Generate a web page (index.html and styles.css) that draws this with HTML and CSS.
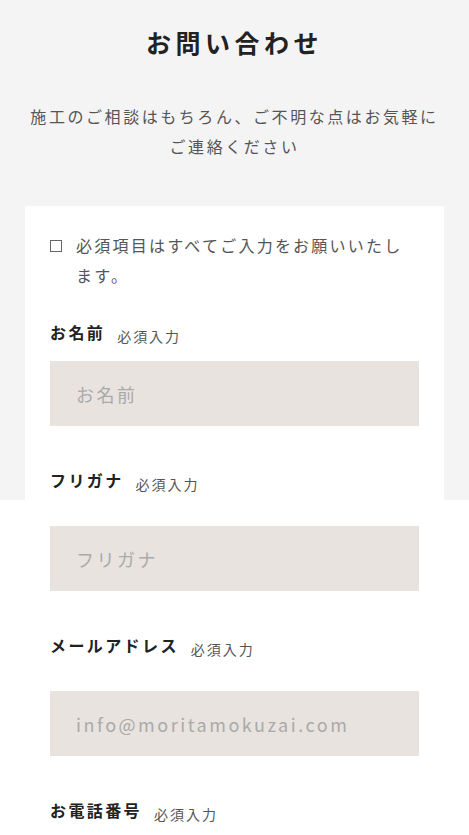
FILE: index.html
```html
<!DOCTYPE html>
<html lang="ja">
<head>
<meta charset="utf-8">
<title>お問い合わせ</title>
<link rel="stylesheet" href="styles.css">
</head>
<body>
<div class="page">
  <section class="hero">
    <h1 class="title">お問い合わせ</h1>
    <p class="lead">施工のご相談はもちろん、ご不明な点はお気軽にご連絡ください</p>
  </section>
  <form class="card">
    <div class="notice">
      <span class="notice-box"></span>
      <p class="notice-text">必須項目はすべてご入力をお願いいたします。</p>
    </div>
    <div class="field field-first">
      <div class="label-row"><span class="label">お名前</span><span class="req">必須入力</span></div>
      <input class="input" type="text" placeholder="お名前">
    </div>
    <div class="field">
      <div class="label-row"><span class="label">フリガナ</span><span class="req">必須入力</span></div>
      <input class="input" type="text" placeholder="フリガナ">
    </div>
    <div class="field">
      <div class="label-row"><span class="label">メールアドレス</span><span class="req">必須入力</span></div>
      <input class="input" type="email" placeholder="info@moritamokuzai.com">
    </div>
    <div class="field">
      <div class="label-row"><span class="label">お電話番号</span><span class="req">必須入力</span></div>
      <input class="input" type="tel" placeholder="">
    </div>
  </form>
</div>
</body>
</html>
```
FILE: styles.css
```css
html, body {
  margin: 0;
  padding: 0;
}
body {
  font-family: "Noto Sans CJK JP", "Noto Sans", sans-serif;
  color: #222;
  background: #fff;
}
.page {
  background: linear-gradient(#f4f4f4 0, #f4f4f4 500px, #fff 500px);
  padding-bottom: 40px;
}
.hero {
  padding: 24px 25px 0;
  text-align: center;
}
.title {
  margin: 0;
  font-size: 25px;
  line-height: 36px;
  font-weight: 700;
  letter-spacing: 0.18em;
  color: #222;
}
.lead {
  margin: 41px 0 0;
  font-size: 16px;
  line-height: 30px;
  letter-spacing: 0.16em;
  color: #555;
}
.card {
  margin: 45px 25px 0;
  background: #fff;
  border-radius: 2px;
  padding: 24px 25px 0;
}
.notice {
  display: flex;
  align-items: flex-start;
  gap: 14px;
}
.notice-box {
  flex: none;
  width: 10px;
  height: 10px;
  border: 1px solid #666;
  margin-top: 10px;
}
.notice-text {
  margin: 0;
  font-size: 16px;
  line-height: 30px;
  letter-spacing: 0.14em;
  color: #555;
}
.field {
  margin-top: 42px;
}
.field-first {
  margin-top: 30px;
}
.label-row {
  display: flex;
  align-items: center;
  height: 24px;
  margin-bottom: 34px;
}
.field-first .label-row {
  margin-bottom: 17px;
}
.label {
  font-size: 16px;
  line-height: 24px;
  font-weight: 700;
  letter-spacing: 0.15em;
  color: #222;
}
.req {
  margin-left: 12px;
  margin-top: 7px;
  font-size: 14px;
  line-height: 20px;
  letter-spacing: 0.14em;
  color: #555;
}
.input {
  display: block;
  box-sizing: border-box;
  width: 100%;
  height: 65px;
  border: 0;
  border-radius: 0;
  background: #e8e3de;
  padding: 0 26px;
  font-family: "Noto Sans CJK JP", "Noto Sans", sans-serif;
  font-size: 18px;
  letter-spacing: 0.14em;
  color: #222;
  outline: none;
}
.input::placeholder {
  color: #aaa;
  opacity: 1;
}
```
